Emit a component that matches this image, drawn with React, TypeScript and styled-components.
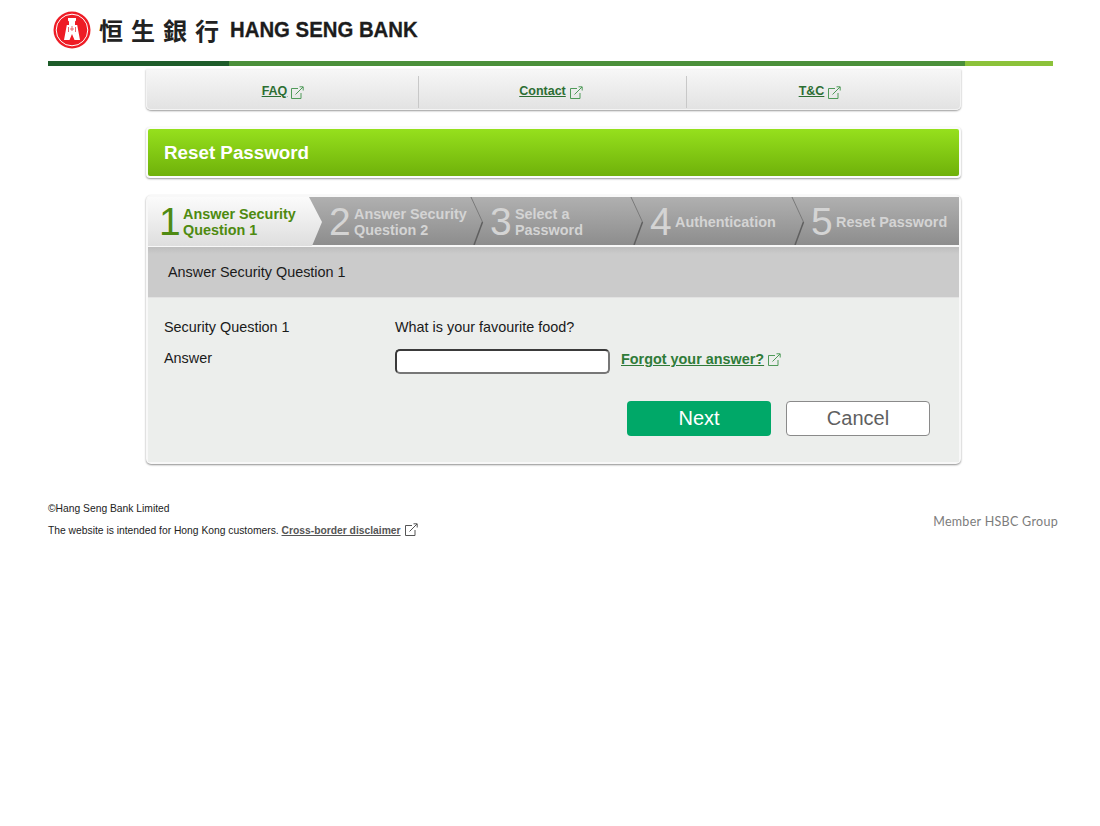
import React from 'react'
import styled, { createGlobalStyle } from 'styled-components'

const GlobalStyle = createGlobalStyle`
  html, body {
    margin: 0;
    padding: 0;
    background: #fff;
    font-family: "Liberation Sans", Arial, sans-serif;
    color: #1a1a1a;
  }
`

// 小圖示
function LinkIcon() {
  return (
    <IconSvg width="13" height="13" viewBox="0 0 13 13" fill="none" stroke="currentColor" strokeWidth="1">
      <path d="M7 2.500H.5V12.500H10V7" />
      <path d="M4.500 8.500L12 1" />
      <path d="M8.500 .8H12.200V4.500" />
    </IconSvg>
  )
}

function Logo() {
  return (
    <svg width="38" height="38" viewBox="0 0 38 38">
      <circle cx="19" cy="19" r="18.500" fill="#ee1c25" />
      <circle cx="19" cy="19" r="15.800" fill="none" stroke="#fff" strokeWidth="1" />
      <path d="M15 7h8v2.500l-1 1V14h2.200L27 29h-5.500L19 23l-2.500 6H11l2.800-15H16v-3.500l-1-1z" fill="#fff" />
      <path d="M15.500 16v5M22.500 16v5M19 15v5M17 18h4" stroke="#e2424a" strokeWidth=".8" fill="none" />
    </svg>
  )
}

const steps = [
  { no: 1, label: ['Answer Security', 'Question 1'] },
  { no: 2, label: ['Answer Security', 'Question 2'] },
  { no: 3, label: ['Select a', 'Password'] },
  { no: 4, label: ['Authentication'] },
  { no: 5, label: ['Reset Password'] },
]

export default function App() {
  return (
    <Page>
      <GlobalStyle />
      <Header>
        <Logo />
        <ChineseName>恒生銀行</ChineseName>
        <EnglishName>HANG SENG BANK</EnglishName>
      </Header>
      <HeaderBar />

      <Main>
        <NavCard>
          <NavItem $width={271} $shift={0}><a>FAQ</a><LinkIcon /></NavItem>
          <NavItem $width={268} $shift={3}><a>Contact</a><LinkIcon /></NavItem>
          <NavItem $width={272} $shift={6}><a>T&amp;C</a><LinkIcon /></NavItem>
        </NavCard>

        <TitleCard><h1>Reset Password</h1></TitleCard>

        <FormCard>
          <StepBar>
            {steps.map((s, i) => (
              <Step key={s.no} $active={i === 0}>
                <StepNo $active={i === 0}>{s.no}</StepNo>
                <StepLabel $active={i === 0}>
                  {s.label.map((l) => <span key={l}>{l}</span>)}
                </StepLabel>
                {i > 0 && i < 4 && (
                  <Chevron width="14" height="48" viewBox="0 0 14 48">
                    <path d="M1 0L12.500 25" fill="none" stroke="#7a7a7a" strokeWidth="1" />
                    <path d="M12.500 25L4 48" fill="none" stroke="#5f5f5f" strokeWidth="1.500" />
                  </Chevron>
                )}
              </Step>
            ))}
          </StepBar>

          <SectionTitle>Answer Security Question 1</SectionTitle>

          <FormBody>
            <Row $top={0}>
              <FieldName>Security Question 1</FieldName>
              <span>What is your favourite food?</span>
            </Row>
            <Row $top={13}>
              <FieldName $up>Answer</FieldName>
              <AnswerInput type="text" />
              <ForgotLink><a>Forgot your answer?</a><LinkIcon /></ForgotLink>
            </Row>
            <Buttons>
              <NextButton>Next</NextButton>
              <CancelButton>Cancel</CancelButton>
            </Buttons>
          </FormBody>
        </FormCard>
      </Main>

      <Footer>
        <div>
          <p>©Hang Seng Bank Limited</p>
          <p>The website is intended for Hong Kong customers. <a>Cross-border disclaimer</a><LinkIcon /></p>
        </div>
        <Member>Member HSBC Group</Member>
      </Footer>
    </Page>
  )
}

// styled
const Page = styled.div`
  width: 1100px;
  min-height: 826px;
  padding-left: 48px;
  box-sizing: border-box;
  background: #fff;
`

const IconSvg = styled.svg`
  vertical-align: -2px;
  margin-left: 4px;
`

const Header = styled.div`
  height: 61px;
  display: flex;
  align-items: center;
  padding-left: 5px;
  padding-bottom: 2px;
  box-sizing: border-box;
`

const ChineseName = styled.div`
  margin-left: 8px;
  font-family: "Noto Sans CJK TC", "Liberation Sans", sans-serif;
  font-size: 24px;
  font-weight: 700;
  letter-spacing: 8px;
  color: #222;
  white-space: nowrap;
`

const EnglishName = styled.div`
  margin-left: 3px;
  font-size: 22px;
  font-weight: 700;
  color: #1c1c1c;
  -webkit-text-stroke: .3px #1c1c1c;
  transform: scaleX(.925);
  transform-origin: left;
  white-space: nowrap;
`

const HeaderBar = styled.div`
  width: 1005px;
  height: 5px;
  background: linear-gradient(to right, #1e5c2a 0, #1e5c2a 181px, #4a8f3a 181px, #4a8f3a 917px, #8cc23a 917px);
`

const Main = styled.div`
  width: 815px;
  margin-left: 98px;
  display: flex;
  flex-direction: column;
`

const NavCard = styled.div`
  margin-top: 3px;
  height: 41px;
  box-sizing: border-box;
  display: flex;
  padding: 7px 2px 2px;
  border-radius: 0 0 5px 5px;
  background: linear-gradient(#f7f7f7, #e2e2e2);
  box-shadow: 0 1px 2px #9a9a9a, inset 0 0 0 1px #f4f4f4;
`

const NavItem = styled.div<{ $width: number; $shift: number }>`
  width: ${(p) => p.$width}px;
  box-sizing: border-box;
  padding: 0 ${(p) => p.$shift}px 2px 0;
  display: flex;
  align-items: center;
  justify-content: center;
  font-size: 12.500px;
  font-weight: 700;
  color: #4f9a59;
  border-right: 1px solid #c8c8c8;
  &:last-child { border-right: 0; }
  a { text-decoration: underline; color: #2c6e33; }
  svg { margin-top: 2px; }
`

const TitleCard = styled.div`
  margin-top: 17px;
  height: 51px;
  box-sizing: border-box;
  padding: 2px;
  background: #fbfbfb;
  border-radius: 4px;
  box-shadow: 0 1px 2px #9a9a9a;
  h1 {
    margin: 0;
    height: 47px;
    padding-left: 16px;
    line-height: 47px;
    font-size: 18.800px;
    font-weight: 700;
    color: #fff;
    border-radius: 2px;
    background: linear-gradient(#96e01d, #6fb10a);
  }
`

const FormCard = styled.div`
  margin-top: 17px;
  padding: 2px 2px 2px;
  background: #f8f8f8;
  border-radius: 5px;
  box-shadow: 0 1px 2px #8f8f8f;
`

const StepBar = styled.div`
  height: 48px;
  display: grid;
  grid-template-columns: 165px 161px 160px 161px 164px;
  background: linear-gradient(#b0b0b0, #8d8d8d);
`

const Step = styled.div<{ $active: boolean }>`
  position: relative;
  display: flex;
  align-items: center;
  padding-left: ${(p) => (p.$active ? 11 : 16)}px;
  ${(p) => p.$active && `
    width: 174px;
    z-index: 1;
    background: linear-gradient(#fbfbfb, #dedede);
    clip-path: polygon(0 0, 161px 0, 174px 25px, 164px 100%, 0 100%);
  `}
`

const StepNo = styled.span<{ $active: boolean }>`
  width: ${(p) => (p.$active ? 24 : 25)}px;
  padding-top: 1px;
  font-size: 39px;
  line-height: 48px;
  color: ${(p) => (p.$active ? '#4f8a12' : '#d4d4d4')};
`

const StepLabel = styled.div<{ $active: boolean }>`
  display: flex;
  flex-direction: column;
  font-size: 14.400px;
  line-height: 16px;
  font-weight: 700;
  white-space: nowrap;
  color: ${(p) => (p.$active ? '#4e8a10' : '#d4d4d4')};
`

const Chevron = styled.svg`
  position: absolute;
  right: -10px;
  top: 0;
`

const SectionTitle = styled.div`
  height: 51px;
  margin-top: 2px;
  padding-left: 20px;
  line-height: 51px;
  font-size: 14.400px;
  background: linear-gradient(#bebebe 0, #cbcbcb 7px);
  border-bottom: 1px solid #e2e2e2;
  box-sizing: border-box;
`

const FormBody = styled.div`
  height: 164px;
  padding: 21px 29px 0 16px;
  background: #eceeec;
  font-size: 14.400px;
  box-sizing: border-box;
`

const Row = styled.div<{ $top: number }>`
  display: flex;
  align-items: center;
  margin-top: ${(p) => p.$top}px;
  line-height: 17px;
`

const FieldName = styled.div<{ $up?: boolean }>`
  width: 231px;
  ${(p) => p.$up && 'position: relative; top: -3px;'}
`

const AnswerInput = styled.input`
  width: 215px;
  height: 25px;
  box-sizing: border-box;
  padding: 0 6px;
  background: #fff;
  border: 2px solid #3a3a3a;
  border-right-color: #777;
  border-bottom-color: #777;
  border-radius: 5px;
  outline: none;
`

const ForgotLink = styled.div`
  margin-left: 11px;
  padding-bottom: 4px;
  color: #4f9a59;
  font-weight: 700;
  a { text-decoration: underline; color: #2f7b38; }
`

const Buttons = styled.div`
  display: flex;
  justify-content: flex-end;
  gap: 15px;
  margin-top: 27px;
`

const NextButton = styled.button`
  width: 144px;
  height: 35px;
  border: 0;
  border-radius: 4px;
  background: #00a868;
  color: #fff;
  font-family: inherit;
  font-size: 20px;
`

const CancelButton = styled(NextButton)`
  background: #fff;
  border: 1px solid #8a8a8a;
  color: #5f5f5f;
`

const Footer = styled.div`
  width: 1010px;
  margin-top: 38px;
  display: flex;
  justify-content: space-between;
  align-items: center;
  font-size: 10.300px;
  color: #222;
  p { margin: 0 0 8px; line-height: 13px; }
  a { font-weight: 700; text-decoration: underline; color: #555; }
  svg { color: #555; }
`

const Member = styled.div`
  font-size: 12.500px;
  letter-spacing: .3px;
  color: #7c7c7c;
  font-family: "Lato", "Liberation Sans", sans-serif;
  position: relative;
  top: -2px;
`
